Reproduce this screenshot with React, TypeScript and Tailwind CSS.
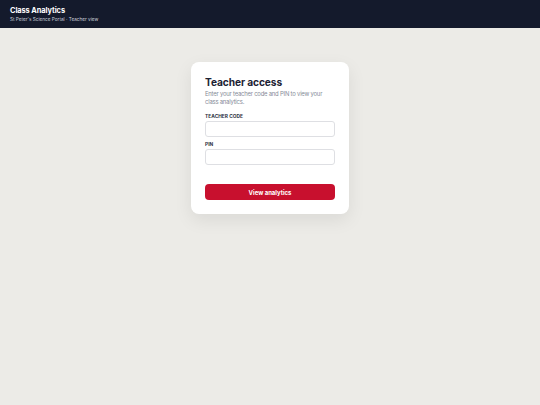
export default function App() {
  return (
    <div className="min-h-screen bg-[#ecebe7] font-['Inter',sans-serif]">
      <header className="flex h-[28px] flex-col justify-center bg-[#141a2c] px-[10px]">
        <h1 className="text-[7.4px] font-bold leading-[10px] tracking-[-0.01em] text-white">Class Analytics</h1>
        <p className="text-[4.7px] leading-[6px] text-[#c9cdd8]">St Peter's Science Portal · Teacher view</p>
      </header>

      <main className="flex justify-center pt-[34px]">
        <div className="w-[158px] rounded-[8px] bg-white px-[14px] pb-[14px] pt-[13px] shadow-[0_6px_18px_rgba(0,0,0,0.08)]">
          <h2 className="text-[10.2px] font-bold leading-[14px] tracking-[-0.01em] text-[#1c2233]">Teacher access</h2>
          <p className="mt-[1px] text-[5.9px] leading-[8px] tracking-[-0.035em] text-[#868b98]">
            Enter your teacher code and PIN to view your class analytics.
          </p>

          <label className="mt-[7px] block text-[4.8px] font-bold uppercase leading-[7px] tracking-[0.01em] text-[#2b3040]">
            Teacher code
          </label>
          <input className="mt-[1px] block h-[16px] w-full rounded-[3px] border border-[#dedfe3] bg-white" />

          <label className="mt-[4px] block text-[4.8px] font-bold uppercase leading-[7px] tracking-[0.01em] text-[#2b3040]">
            Pin
          </label>
          <input className="mt-[1px] block h-[16px] w-full rounded-[3px] border border-[#dedfe3] bg-white" />

          <button className="mt-[19px] flex h-[16px] w-full items-center justify-center rounded-[4px] bg-[#c8102e] text-[6px] font-bold text-white">
            View analytics
          </button>
        </div>
      </main>
    </div>
  );
}
